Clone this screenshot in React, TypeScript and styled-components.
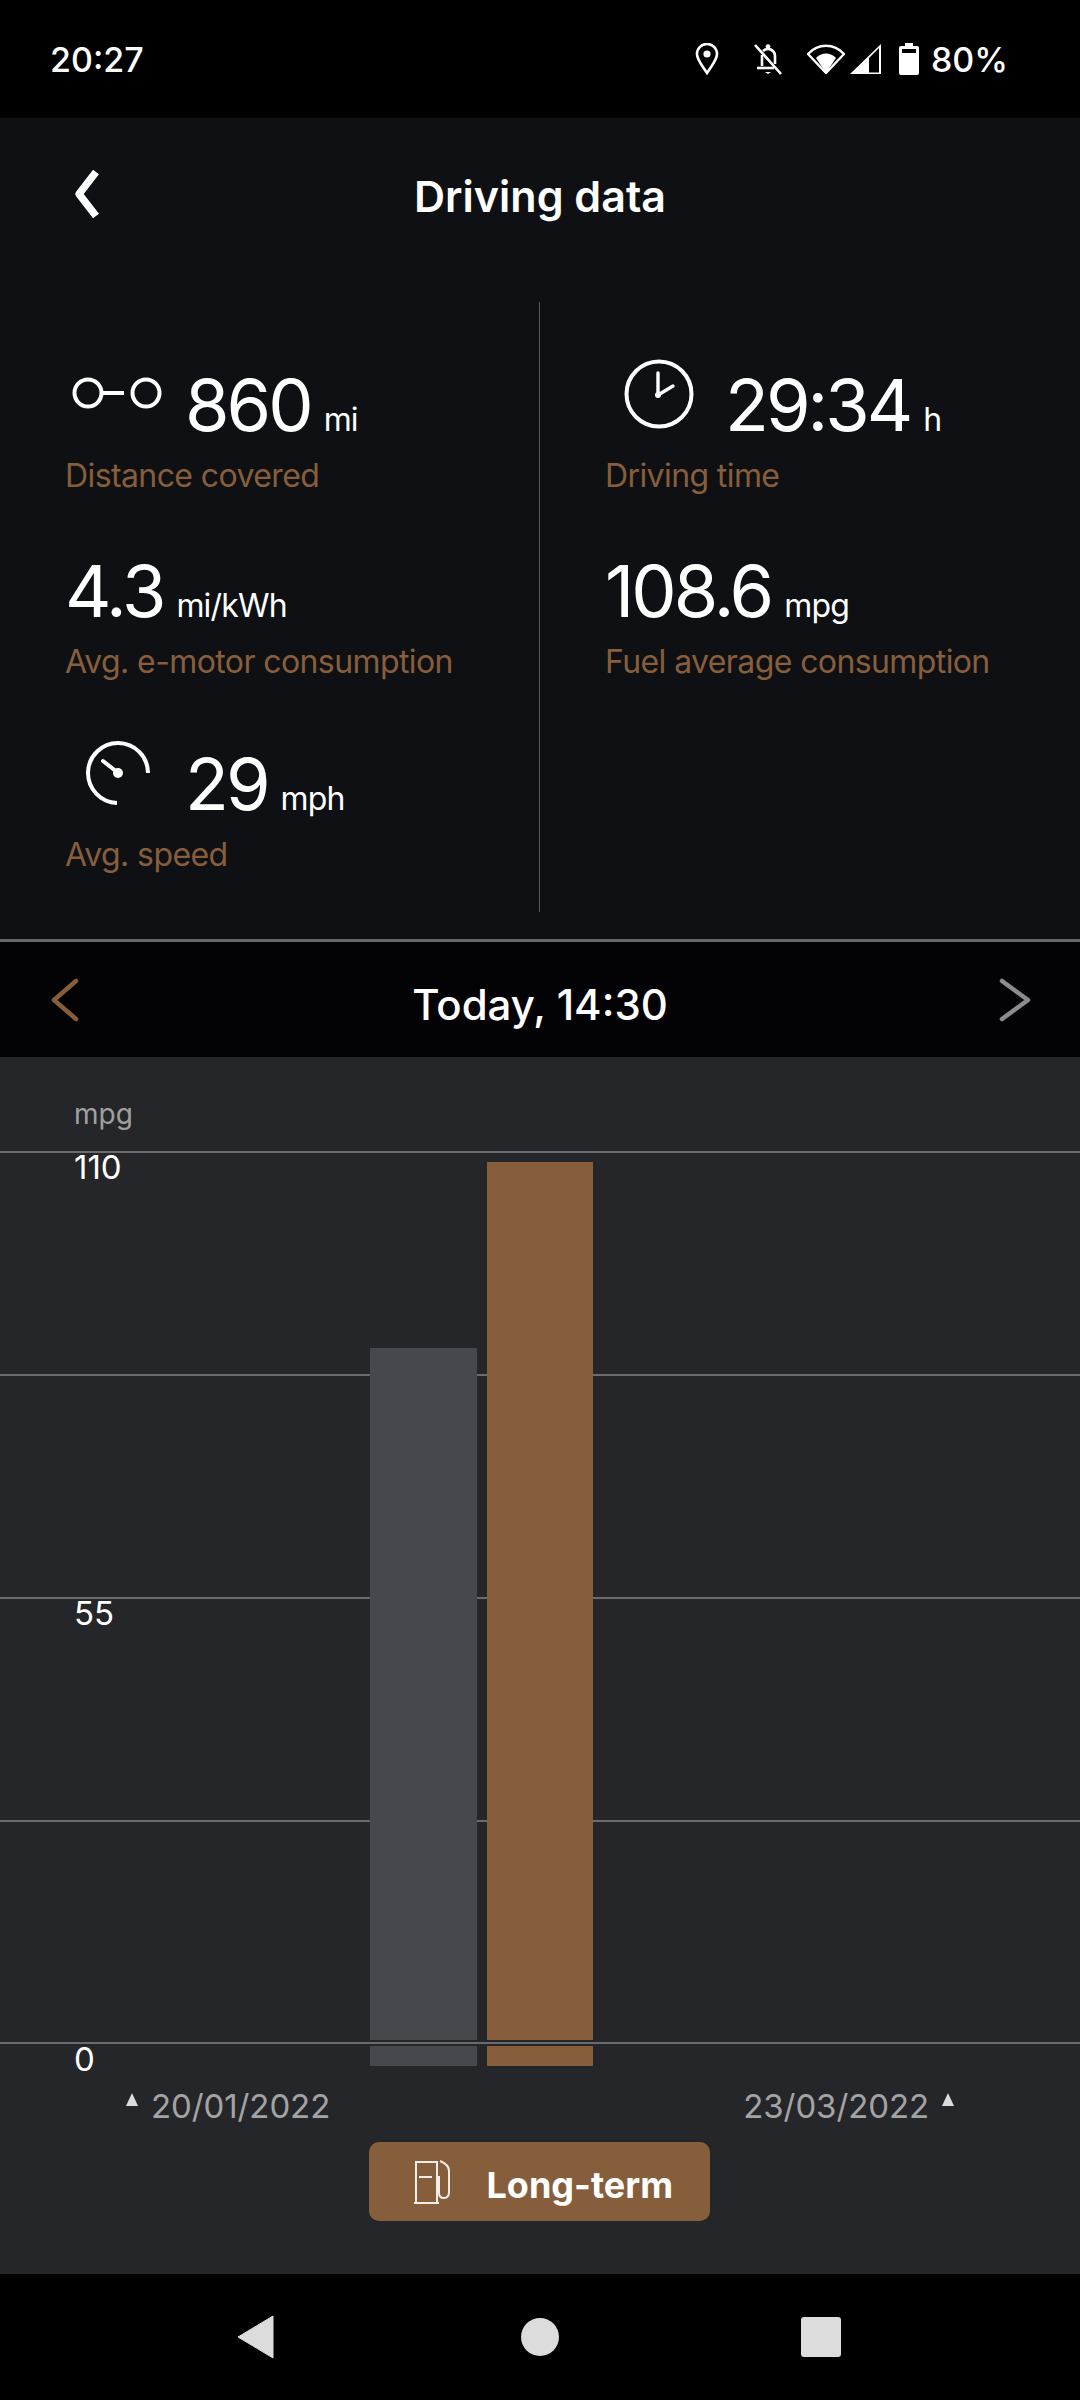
import styled, { createGlobalStyle } from 'styled-components';
import type { ReactNode } from 'react';

const GlobalStyle = createGlobalStyle`
  html, body {
    margin: 0;
    padding: 0;
    background: #000;
  }
  * {
    box-sizing: border-box;
  }
`;

const FONT = `Inter, 'Noto Sans', sans-serif`;
const BROWN = '#875e3c';

const LeftIcon = () => (
  <svg width="44" height="52" viewBox="0 0 44 52" fill="none">
    <path d="M30 4 L13 26 L30 48" stroke="currentColor" strokeWidth="7.5" strokeLinejoin="round" />
  </svg>
);

const Chevron = ({ flip }: { flip?: boolean }) => (
  <svg width="34" height="44" viewBox="0 0 34 44" fill="none">
    <path
      d={flip ? 'M4 3 L30 22 L4 41' : 'M28 3 L6 22 L28 41'}
      stroke="currentColor"
      strokeWidth="4.5"
      strokeLinecap="round"
      strokeLinejoin="round"
    />
  </svg>
);

const StatusIcons = () => (
  <StatusIconRow>
    <svg width="24" height="32" viewBox="0 0 24 32" fill="none">
      <path d="M12 30 C7 22 2 17 2 11 A10 10 0 0 1 22 11 C22 17 17 22 12 30Z" stroke="#fff" strokeWidth="2.6" />
      <circle cx="12" cy="11" r="3.6" fill="#fff" />
    </svg>
    <BellGap>
      <svg width="30" height="32" viewBox="0 0 30 32" fill="none">
        <path d="M9 12 V23 M22 21 V13 C22 9 19 6 15 6 C13 6 11 7 10 8" stroke="#fff" strokeWidth="2.6" />
        <path d="M4 25 H21" stroke="#fff" strokeWidth="2.6" />
        <path d="M2 2 L28 31" stroke="#fff" strokeWidth="2.6" />
        <circle cx="15" cy="3.6" r="2.4" fill="#fff" />
        <path d="M12 29 H18 L15 31Z" fill="#fff" />
      </svg>
    </BellGap>
    <WifiGap>
      <svg width="40" height="32" viewBox="0 0 40 32" fill="none">
        <path d="M2 11 C12 0 28 0 38 11 L20 30Z" stroke="#fff" strokeWidth="2.4" strokeLinejoin="round" />
        <path d="M10 15 C15 9 25 9 30 15 L20 30Z" fill="#fff" />
      </svg>
      <svg width="33" height="32" viewBox="0 0 33 32" fill="none">
        <path d="M1 31 L32 1 V31Z M20 20 V29.5 H30 V5 L20 15Z" fill="#fff" fillRule="evenodd" />
      </svg>
    </WifiGap>
    <BatteryGap>
      <svg width="20" height="32" viewBox="0 0 20 32">
        <path d="M6 0 H14 V3 H18 A2 2 0 0 1 20 5 V30 A2 2 0 0 1 18 32 H2 A2 2 0 0 1 0 30 V5 A2 2 0 0 1 2 3 H6Z" fill="#fff" />
        <rect x="3" y="6" width="14" height="4" fill="#000" />
      </svg>
    </BatteryGap>
    <StatusPercent>80%</StatusPercent>
  </StatusIconRow>
);

const DistanceIcon = () => (
  <svg width="98" height="40" viewBox="0 0 98 40" fill="none">
    <circle cx="19" cy="19" r="13.5" stroke="#fff" strokeWidth="4" />
    <path d="M32 19 H55" stroke="#fff" strokeWidth="4" />
    <circle cx="77" cy="19" r="13.5" stroke="#fff" strokeWidth="4" />
  </svg>
);

const ClockIcon = () => (
  <svg width="70" height="70" viewBox="0 0 70 70" fill="none">
    <circle cx="35" cy="35" r="32.5" stroke="#fff" strokeWidth="4" />
    <path d="M34 36 V14 M34 36 L49 27" stroke="#fff" strokeWidth="3.4" strokeLinecap="round" />
    <circle cx="34" cy="36" r="3" fill="#fff" />
  </svg>
);

const GaugeIcon = () => (
  <svg width="66" height="66" viewBox="0 0 66 66" fill="none">
    <path d="M32 63 A30 30 0 1 1 63 33" stroke="#fff" strokeWidth="4" />
    <path d="M18 21 L32 32" stroke="#fff" strokeWidth="4" strokeLinecap="round" />
    <circle cx="33" cy="33" r="5" fill="#fff" />
  </svg>
);

const FuelIcon = () => (
  <svg width="40" height="44" viewBox="0 0 40 44" fill="none" stroke="#f2ede8" strokeWidth="2">
    <path d="M3 42 V2 H24 V42" />
    <path d="M1 43 H26" />
    <path d="M6 17 H19" />
    <path d="M27 1 C32 3 36 6 36 11 V32 C36 36 34 38 31 38 C28 38 26 36 26 33 V17 H24" />
  </svg>
);

type StatProps = {
  icon?: ReactNode;
  iconLeft?: number;
  iconTop?: number;
  value: string;
  unit: string;
  label: string;
};

const Stat = ({ icon, iconLeft, iconTop, value, unit, label }: StatProps) => (
  <StatBlock>
    <ValueRow>
      {icon && (
        <IconSlot $left={iconLeft ?? 0} $top={iconTop ?? 0}>
          {icon}
        </IconSlot>
      )}
      <Value>{value}</Value>
      <Unit>{unit}</Unit>
    </ValueRow>
    <Label>{label}</Label>
  </StatBlock>
);

const App = () => {
  const axis = ['110', '', '55', ''];

  return (
    <Page>
      <GlobalStyle />
      <StatusBar>
        <StatusTime>20:27</StatusTime>
        <StatusIcons />
      </StatusBar>

      <Summary>
        <Header>
          <BackButton>
            <LeftIcon />
          </BackButton>
          <Title>Driving data</Title>
        </Header>
        <StatsGrid>
          <StatsColumn $first>
            <Stat icon={<DistanceIcon />} iconLeft={4} iconTop={13} value="860" unit="mi" label="Distance covered" />
            <Stat value="4.3" unit="mi/kWh" label="Avg. e-motor consumption" />
            <Stat icon={<GaugeIcon />} iconLeft={20} value="29" unit="mph" label="Avg. speed" />
          </StatsColumn>
          <StatsColumn>
            <Stat icon={<ClockIcon />} iconLeft={19} iconTop={-2} value="29:34" unit="h" label="Driving time" />
            <Stat value="108.6" unit="mpg" label="Fuel average consumption" />
          </StatsColumn>
        </StatsGrid>
      </Summary>

      <DateBar>
        <DateArrow $color={BROWN}>
          <Chevron />
        </DateArrow>
        <DateText>Today, 14:30</DateText>
        <DateArrow $color="#8c8c8c">
          <Chevron flip />
        </DateArrow>
      </DateBar>

      <ChartPanel>
        <ChartUnit>mpg</ChartUnit>
        <Plot>
          {axis.map((tick, i) => (
            <GridRow key={i}>{tick && <AxisLabel>{tick}</AxisLabel>}</GridRow>
          ))}
          <BaseLine>
            <AxisLabel>0</AxisLabel>
          </BaseLine>
          <Bars>
            <Bar $color="#47484d" $height={718} />
            <Bar $color={BROWN} $height={904} />
          </Bars>
          <BaseStroke />
        </Plot>
        <RangeRow>
          <RangeDate>
            <Marker />
            20/01/2022
          </RangeDate>
          <RangeDate>
            23/03/2022
            <Marker />
          </RangeDate>
        </RangeRow>
        <ButtonRow>
          <ModeButton>
            <FuelIcon />
            <ModeLabel>Long-term</ModeLabel>
          </ModeButton>
        </ButtonRow>
      </ChartPanel>

      <NavBar>
        <svg width="38" height="44" viewBox="0 0 38 44">
          <path d="M36 1 V43 L1 22Z" fill="#dcdcdc" stroke="#dcdcdc" strokeWidth="1" strokeLinejoin="round" />
        </svg>
        <NavCircle />
        <NavSquare />
      </NavBar>
    </Page>
  );
};

export default App;

const Page = styled.div`
  width: 1080px;
  height: 2400px;
  display: flex;
  flex-direction: column;
  font-family: ${FONT};
  color: #fff;
  overflow: hidden;
`;

const StatusBar = styled.div`
  height: 118px;
  background: #000;
  display: flex;
  justify-content: space-between;
  align-items: center;
  padding: 0 72px 0 50px;
`;

const StatusTime = styled.span`
  font-size: 34px;
  font-weight: 500;
`;

const StatusIconRow = styled.div`
  display: flex;
  align-items: center;
`;

const BellGap = styled.span`
  display: flex;
  margin-left: 34px;
`;

const WifiGap = styled.span`
  display: flex;
  gap: 3px;
  margin-left: 23px;
`;

const BatteryGap = styled.span`
  display: flex;
  margin-left: 17px;
`;

const StatusPercent = styled.span`
  font-size: 34px;
  font-weight: 500;
  margin-left: 12px;
`;

const Summary = styled.div`
  height: 824px;
  background: #0e1013;
  display: flex;
  flex-direction: column;
  border-bottom: 3px solid #66686a;
`;

const Header = styled.div`
  height: 184px;
  position: relative;
  display: flex;
  align-items: center;
  justify-content: center;
  padding-bottom: 28px;
`;

const BackButton = styled.div`
  position: absolute;
  left: 66px;
  top: 50px;
  display: flex;
`;

const Title = styled.h1`
  margin: 0;
  font-size: 43px;
  font-weight: 600;
`;

const StatsGrid = styled.div`
  display: grid;
  grid-template-columns: 540px 540px;
  grid-template-rows: 610px;
`;

const StatsColumn = styled.div<{ $first?: boolean }>`
  display: flex;
  flex-direction: column;
  min-height: 0;
  padding: 59px 0 0 65px;
  border-right: ${(p) => (p.$first ? '1px solid #55575a' : 'none')};
`;

const StatBlock = styled.div`
  display: flex;
  flex-direction: column;
  flex: none;
  height: 186px;

  &:nth-child(3) {
    margin-top: 7px;
  }
`;

const ValueRow = styled.div`
  display: flex;
  align-items: baseline;
  height: 88px;
`;

const IconSlot = styled.div<{ $left: number; $top: number }>`
  width: 120px;
  align-self: flex-start;
  display: flex;
  padding-left: ${(p) => p.$left}px;
  margin-top: ${(p) => p.$top}px;
`;

const Value = styled.span`
  font-size: 72px;
  font-weight: 400;
  letter-spacing: -3px;
  line-height: 88px;
`;

const Unit = styled.span`
  font-size: 32px;
  letter-spacing: -0.8px;
  margin-left: 13px;
`;

const Label = styled.div`
  font-size: 32px;
  letter-spacing: -0.6px;
  color: ${BROWN};
  margin-top: 7px;
`;

const DateBar = styled.div`
  height: 115px;
  background: #030305;
  display: flex;
  align-items: center;
  justify-content: space-between;
  padding: 0 48px;
`;

const DateArrow = styled.div<{ $color: string }>`
  color: ${(p) => p.$color};
  display: flex;
`;

const DateText = styled.span`
  font-size: 42px;
  font-weight: 500;
  padding-top: 10px;
`;

const ChartPanel = styled.div`
  height: 1217px;
  background: #25262a;
  display: flex;
  flex-direction: column;
`;

const ChartUnit = styled.div`
  height: 94px;
  padding: 40px 0 0 74px;
  font-size: 28px;
  color: #a0a0a0;
`;

const Plot = styled.div`
  position: relative;
  height: 932px;
`;

const GridRow = styled.div`
  height: 223px;
  border-top: 2px solid #6b6b6b;
  padding-left: 74px;
`;

const BaseLine = styled.div`
  padding: 2px 0 0 74px;
`;

const BaseStroke = styled.div`
  position: absolute;
  left: 0;
  right: 0;
  top: 889px;
  height: 6px;
  border-top: 2px solid #25262a;
  border-bottom: 2px solid #25262a;
  background: #6b6b6b;
`;

const AxisLabel = styled.div`
  font-size: 33px;
  line-height: 40px;
  margin-top: -6px;
`;

const Bars = styled.div`
  position: absolute;
  left: 370px;
  bottom: 17px;
  display: flex;
  align-items: flex-end;
  gap: 10px;
`;

const Bar = styled.div<{ $color: string; $height: number }>`
  width: 106.5px;
  height: ${(p) => p.$height}px;
  background: ${(p) => p.$color};
`;

const RangeRow = styled.div`
  display: flex;
  justify-content: space-between;
  padding: 3px 126px 0;
  height: 59px;
`;

const RangeDate = styled.div`
  display: flex;
  align-items: flex-start;
  gap: 13px;
  font-size: 33px;
  letter-spacing: -0.1px;
  line-height: 40px;
  color: #a3a3a3;
`;

const Marker = styled.span`
  width: 0;
  height: 0;
  margin-top: 7px;
  border-left: 6px solid transparent;
  border-right: 6px solid transparent;
  border-bottom: 13px solid #dcdcdc;
`;

const ButtonRow = styled.div`
  display: flex;
  justify-content: center;
  padding-right: 2px;
`;

const ModeButton = styled.div`
  width: 341px;
  height: 79px;
  background: ${BROWN};
  border-radius: 10px;
  display: flex;
  align-items: center;
  gap: 34px;
  padding-left: 44px;
`;

const ModeLabel = styled.span`
  font-size: 36px;
  font-weight: 700;
  padding-top: 6px;
`;

const NavBar = styled.div`
  height: 126px;
  background: #000;
  display: flex;
  align-items: center;
  padding: 0 239px 0 237px;
  justify-content: space-between;
`;

const NavCircle = styled.div`
  width: 38px;
  height: 38px;
  margin-left: 4px;
  border-radius: 50%;
  background: #dcdcdc;
`;

const NavSquare = styled.div`
  width: 40px;
  height: 40px;
  border-radius: 3px;
  background: #dcdcdc;
`;
